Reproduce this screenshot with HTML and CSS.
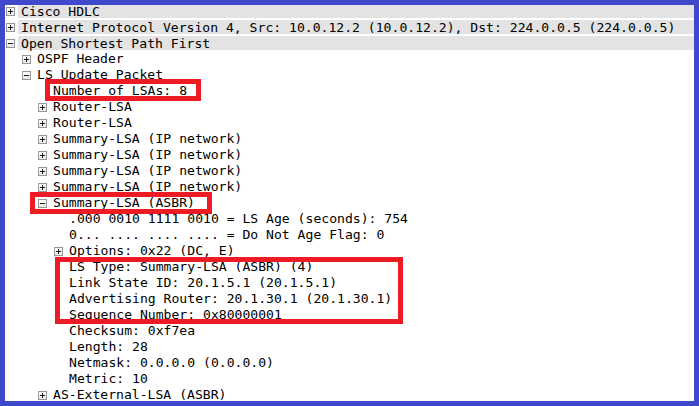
FILE: index.html
```html
<!DOCTYPE html>
<html lang="en">
<head>
    <meta charset="UTF-8">
    <meta name="viewport" content="width=device-width, initial-scale=1.0">
    <title>OSPF LS Update</title>
    <link rel="stylesheet" href="styles.css">
</head>
<body>

    <div class="frame">
        <div class="tree">
            <div class="row top"><span class="exp plus"></span><span class="label">Cisco HDLC</span></div>
            <div class="row top"><span class="exp plus"></span><span class="label">Internet Protocol Version 4, Src: 10.0.12.2 (10.0.12.2), Dst: 224.0.0.5 (224.0.0.5)</span></div>
            <div class="row top"><span class="exp minus"></span><span class="label">Open Shortest Path First</span></div>
            <div class="row lvl1"><span class="exp plus"></span><span class="label">OSPF Header</span></div>
            <div class="row lvl1"><span class="exp minus"></span><span class="label">LS Update Packet</span></div>
            <div class="row lvl2"><span class="exp none"></span><span class="label">Number of LSAs: 8</span></div>
            <div class="row lvl2"><span class="exp plus"></span><span class="label">Router-LSA</span></div>
            <div class="row lvl2"><span class="exp plus"></span><span class="label">Router-LSA</span></div>
            <div class="row lvl2"><span class="exp plus"></span><span class="label">Summary-LSA (IP network)</span></div>
            <div class="row lvl2"><span class="exp plus"></span><span class="label">Summary-LSA (IP network)</span></div>
            <div class="row lvl2"><span class="exp plus"></span><span class="label">Summary-LSA (IP network)</span></div>
            <div class="row lvl2"><span class="exp plus"></span><span class="label">Summary-LSA (IP network)</span></div>
            <div class="row lvl2"><span class="exp minus"></span><span class="label">Summary-LSA (ASBR)</span></div>
            <div class="row lvl3"><span class="exp none"></span><span class="label">.000 0010 1111 0010 = LS Age (seconds): 754</span></div>
            <div class="row lvl3"><span class="exp none"></span><span class="label">0... .... .... .... = Do Not Age Flag: 0</span></div>
            <div class="row lvl3"><span class="exp plus"></span><span class="label">Options: 0x22 (DC, E)</span></div>
            <div class="row lvl3"><span class="exp none"></span><span class="label">LS Type: Summary-LSA (ASBR) (4)</span></div>
            <div class="row lvl3"><span class="exp none"></span><span class="label">Link State ID: 20.1.5.1 (20.1.5.1)</span></div>
            <div class="row lvl3"><span class="exp none"></span><span class="label">Advertising Router: 20.1.30.1 (20.1.30.1)</span></div>
            <div class="row lvl3"><span class="exp none"></span><span class="label">Sequence Number: 0x80000001</span></div>
            <div class="row lvl3"><span class="exp none"></span><span class="label">Checksum: 0xf7ea</span></div>
            <div class="row lvl3"><span class="exp none"></span><span class="label">Length: 28</span></div>
            <div class="row lvl3"><span class="exp none"></span><span class="label">Netmask: 0.0.0.0 (0.0.0.0)</span></div>
            <div class="row lvl3"><span class="exp none"></span><span class="label">Metric: 10</span></div>
            <div class="row lvl2"><span class="exp plus"></span><span class="label">AS-External-LSA (ASBR)</span></div>
        </div>

        <!-- red annotation boxes -->
        <div class="mark mark-count"></div>
        <div class="mark mark-asbr"></div>
        <div class="mark mark-fields"></div>
    </div>

</body>
</html>
```

FILE: styles.css
```css
body {
    margin: 0;
    background-color: #4049cc;
    font-family: "DejaVu Sans Mono", "Liberation Mono", monospace;
    font-size: 13.1px;
    color: #000;
}
.frame {
    position: relative;
    margin: 5px;
    width: 689px;
    height: 396px;
    background: #fff;
    overflow: hidden;
}
.tree {
    margin-top: -2px;
}
.row {
    display: flex;
    align-items: center;
    height: 16px;
    white-space: pre;
}
.lvl1 { padding-left: 16px; }
.lvl2 { padding-left: 32px; }
.lvl3 { padding-left: 48px; }
.exp {
    position: relative;
    flex: none;
    box-sizing: border-box;
    width: 9px;
    height: 9px;
    margin: 1px 6px 0 1px;
    border: 1px solid #979797;
    background: linear-gradient(#fff, #e6e6e6);
}
.exp.none {
    visibility: hidden;
}
.exp::before,
.exp::after {
    content: "";
    position: absolute;
    background: #1a1a1a;
}
.exp::before {
    left: 1px;
    top: 3px;
    width: 5px;
    height: 1px;
}
.plus::after {
    left: 3px;
    top: 1px;
    width: 1px;
    height: 5px;
}
.minus::after {
    display: none;
}
.label {
    line-height: 16px;
}
.top .exp {
    margin-right: 3px;
}
.top .label {
    flex: 1;
    height: 14px;
    line-height: 15px;
    padding-left: 3px;
    background: #e3e3e3;
}
.mark {
    position: absolute;
    border: 5px solid #ed1c24;
    box-sizing: border-box;
}
.mark-count {
    left: 40px;
    top: 74px;
    width: 156px;
    height: 22px;
}
.mark-asbr {
    left: 25px;
    top: 187px;
    width: 182px;
    height: 22px;
}
.mark-fields {
    left: 50px;
    top: 252px;
    width: 348px;
    height: 67px;
}
```
